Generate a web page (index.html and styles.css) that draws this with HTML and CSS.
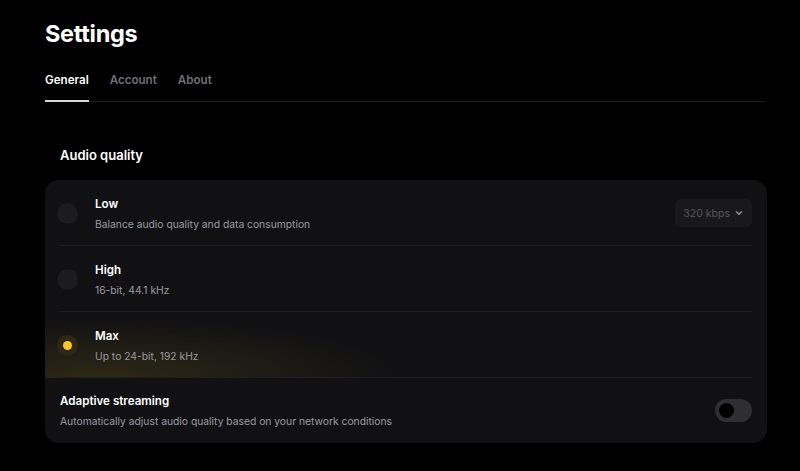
FILE: index.html
```html
<!DOCTYPE html>
<html lang="en">

<head>
    <meta charset="UTF-8">
    <meta name="viewport" content="width=device-width, initial-scale=1.0">
    <title>Settings</title>
    <link rel="stylesheet" href="styles.css">
</head>

<body>
    <div class="page">
        <h1 class="page-title">Settings</h1>

        <nav class="tabs">
            <a href="#" class="tab active">General</a>
            <a href="#" class="tab">Account</a>
            <a href="#" class="tab">About</a>
        </nav>

        <h2 class="section-title">Audio quality</h2>

        <div class="card">
            <div class="option">
                <span class="radio"></span>
                <div class="option-text">
                    <div class="option-title">Low</div>
                    <div class="option-desc">Balance audio quality and data consumption</div>
                </div>
                <button class="select">320 kbps
                    <svg width="10" height="10" viewBox="0 0 10 10">
                        <path d="M2.5 3.8 L5 6.3 L7.5 3.8" fill="none" stroke="currentColor" stroke-width="1.6"
                            stroke-linecap="round" stroke-linejoin="round" />
                    </svg>
                </button>
            </div>

            <div class="option">
                <span class="radio"></span>
                <div class="option-text">
                    <div class="option-title">High</div>
                    <div class="option-desc">16-bit, 44.1 kHz</div>
                </div>
            </div>

            <div class="option selected">
                <span class="radio checked"></span>
                <div class="option-text">
                    <div class="option-title">Max</div>
                    <div class="option-desc">Up to 24-bit, 192 kHz</div>
                </div>
            </div>

            <div class="setting">
                <div class="option-text">
                    <div class="option-title">Adaptive streaming</div>
                    <div class="option-desc">Automatically adjust audio quality based on your network conditions</div>
                </div>
                <span class="toggle"><span class="knob"></span></span>
            </div>
        </div>
    </div>
</body>

</html>
```

FILE: styles.css
```css
body {
    margin: 0;
    background-color: #000;
    color: #fff;
    font-family: "Inter", "Noto Sans", sans-serif;
}

.page {
    width: 722px;
    padding: 16px 0 0 45px;
}

.page-title {
    margin: 0;
    font-size: 23.5px;
    line-height: 36px;
    font-weight: 700;
    letter-spacing: -0.3px;
}

/* Tabs */
.tabs {
    display: flex;
    gap: 21px;
    margin-top: 20px;
    width: 720px;
    border-bottom: 1px solid #1e1e21;
}

.tab {
    font-size: 11.6px;
    line-height: 16px;
    font-weight: 600;
    color: #6f6f79;
    text-decoration: none;
    padding-bottom: 12px;
    margin-bottom: -1px;
    border-bottom: 2px solid transparent;
}

.tab.active {
    color: #fff;
    border-bottom-color: #d8d8d8;
}

.section-title {
    margin: 43px 0 15px 15px;
    font-size: 13px;
    line-height: 20px;
    font-weight: 600;
}

/* Card */
.card {
    background-color: #111113;
    border-radius: 14px;
    overflow: hidden;
}

.option,
.setting {
    display: flex;
    align-items: center;
    height: 66px;
    padding: 0 15px;
    box-sizing: border-box;
}

/* row divider, inset 15px on both sides */
.option {
    background-image: linear-gradient(#1f1f22, #1f1f22);
    background-size: calc(100% - 30px) 1px;
    background-position: 15px 100%;
    background-repeat: no-repeat;
}

.option.selected {
    background-image:
        linear-gradient(#1f1f22, #1f1f22),
        radial-gradient(ellipse 300px 60px at 8% 100%, rgba(110, 92, 30, 0.3), rgba(110, 92, 30, 0) 100%);
    background-size: calc(100% - 30px) 1px, 100% 100%;
    background-position: 15px 100%, 0 0;
}

.setting {
    height: 65px;
}

.radio {
    flex: none;
    width: 21px;
    height: 21px;
    margin-left: -3px;
    margin-right: 17px;
    border-radius: 50%;
    background-color: #1c1c1f;
    display: flex;
    align-items: center;
    justify-content: center;
}

.radio.checked {
    background-color: #2d2714;
}

.radio.checked::after {
    content: "";
    width: 9px;
    height: 9px;
    border-radius: 50%;
    background-color: #f8c72c;
}

.option-text {
    flex: 1;
    display: flex;
    flex-direction: column;
    gap: 3px;
}

.option-title {
    font-size: 11.6px;
    line-height: 18px;
    font-weight: 600;
    color: #fff;
}

.option-desc {
    font-size: 10.3px;
    line-height: 16px;
    color: #9b9ba2;
}

.select {
    display: flex;
    align-items: center;
    gap: 4px;
    height: 28px;
    padding: 0 8px 0 8px;
    border: none;
    border-radius: 6px;
    background-color: #19191c;
    color: #55555c;
    font-family: inherit;
    font-size: 10.5px;
}

.select svg {
    color: #8a8a90;
}

/* Toggle */
.toggle {
    flex: none;
    display: flex;
    align-items: center;
    width: 37px;
    height: 23px;
    padding: 0 4px;
    box-sizing: border-box;
    border-radius: 12px;
    background-color: #2e2e33;
}

.knob {
    width: 15px;
    height: 15px;
    border-radius: 50%;
    background-color: #000;
}
```
